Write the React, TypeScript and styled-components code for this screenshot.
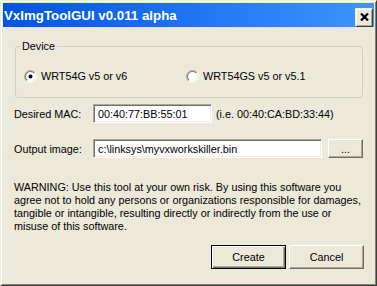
import React from 'react';
import styled, { createGlobalStyle } from 'styled-components';

const GlobalStyle = createGlobalStyle`
  html, body {
    margin: 0;
    padding: 0;
    background: #ece9d8;
  }
  body {
    font-family: 'Liberation Sans', Arial, sans-serif;
    font-size: 10.8px;
    color: #000;
  }
`;

export default function App() {
  return (
    <>
      <GlobalStyle />
      <Window>
        <TitleBar>
          <Title>VxImgToolGUI v0.011 alpha</Title>
          <CloseButton aria-label='Close'>
            <svg width='9' height='8' viewBox='0 0 9 8'>
              <path
                d='M1 0.5 L8 7.5 M8 0.5 L1 7.5'
                stroke='#000'
                strokeWidth='2.2'
                fill='none'
              />
            </svg>
          </CloseButton>
        </TitleBar>
        <Body>
          <GroupBox>
            <Legend>Device</Legend>
            <RadioRow>
              <RadioOption>
                <Radio checked />
                WRT54G v5 or v6
              </RadioOption>
              <RadioOption>
                <Radio />
                WRT54GS v5 or v5.1
              </RadioOption>
            </RadioRow>
          </GroupBox>
          <FieldRow $top={6}>
            <Label>Desired MAC:</Label>
            <TextBox $width={119}>00:40:77:BB:55:01</TextBox>
            <Hint>(i.e. 00:40:CA:BD:33:44)</Hint>
          </FieldRow>
          <FieldRow $top={16}>
            <Label>Output image:</Label>
            <TextBox $width={229}>c:\linksys\myvxworkskiller.bin</TextBox>
            <Button $width={35} $small>...</Button>
          </FieldRow>
          <Warning>
            WARNING: Use this tool at your own risk. By using this software you
            <br />
            agree not to hold any persons or organizations responsible for damages,
            <br />
            tangible or intangible, resulting directly or indirectly from the use or
            <br />
            misuse of this software.
          </Warning>
          <ButtonRow>
            <Button $width={75} $default>
              Create
            </Button>
            <Button $width={75}>Cancel</Button>
          </ButtonRow>
        </Body>
      </Window>
    </>
  );
}

function Radio({ checked }: { checked?: boolean }) {
  return (
    <RadioIcon width='13' height='13' viewBox='0 0 13 13'>
      <defs>
        <linearGradient id='rimDark' x1='0' y1='0' x2='1' y2='1'>
          <stop offset='0.5' stopColor='#aca899' />
          <stop offset='0.5' stopColor='#ffffff' />
        </linearGradient>
        <linearGradient id='rimInner' x1='0' y1='0' x2='1' y2='1'>
          <stop offset='0.5' stopColor='#716f64' />
          <stop offset='0.5' stopColor='#f1efe2' />
        </linearGradient>
      </defs>
      <circle cx='6.5' cy='6.5' r='6' fill='none' stroke='url(#rimDark)' />
      <circle cx='6.5' cy='6.5' r='5' fill='#fff' stroke='url(#rimInner)' />
      {checked && <circle cx='6.5' cy='6.5' r='2' fill='#000' />}
    </RadioIcon>
  );
}

const Window = styled.div`
  box-sizing: border-box;
  width: 377px;
  height: 286px;
  background: #ece9d8;
  border: 1px solid;
  border-color: #f1efe2 #404040 #404040 #f1efe2;
  box-shadow: inset 1px 1px #fff, inset -1px -1px #808080;
  padding: 2px;
  display: flex;
  flex-direction: column;
`;

const TitleBar = styled.div`
  height: 24px;
  display: flex;
  align-items: center;
  justify-content: space-between;
  padding: 0 1px 0 1px;
  background: linear-gradient(to right, #0054e3, #3d95ff);
`;

const Title = styled.div`
  color: #fff;
  font-family: 'Liberation Sans', Arial, sans-serif;
  font-weight: bold;
  font-size: 13.3px;
  padding-top: 1px;
`;

const CloseButton = styled.div`
  box-sizing: border-box;
  width: 18px;
  height: 19px;
  margin-top: 4px;
  display: flex;
  align-items: center;
  justify-content: center;
  background: #ece9d8;
  border: 1px solid;
  border-color: #f1efe2 #404040 #404040 #f1efe2;
  box-shadow: inset 1px 1px #fff, inset -1px -1px #aca899;
`;

const Body = styled.div`
  display: flex;
  flex-direction: column;
  padding: 13px 11px 0 11px;
`;

const GroupBox = styled.fieldset`
  margin: 0 0 0 1px;
  padding: 0 8px 14px 8px;
  border: 1px solid #d0d0bf;
  border-radius: 3px;
`;

const Legend = styled.legend`
  padding: 0 2px;
  margin-left: -4px;
  line-height: 13px;
`;

const RadioRow = styled.div`
  display: flex;
  margin-top: 17px;
`;

const RadioOption = styled.label`
  width: 162px;
  display: flex;
  align-items: center;
  gap: 4px;
  line-height: 13px;
`;

const RadioIcon = styled.svg`
  flex: none;
`;

const FieldRow = styled.div<{ $top: number }>`
  display: flex;
  align-items: center;
  margin-top: ${(p) => p.$top}px;
`;

const Label = styled.div`
  width: 79px;
`;

const TextBox = styled.div<{ $width: number }>`
  box-sizing: border-box;
  width: ${(p) => p.$width}px;
  height: 19px;
  padding: 0 4px;
  display: flex;
  align-items: center;
  background: #fff;
  border: 1px solid;
  border-color: #aca899 #fff #fff #aca899;
  box-shadow: inset 1px 1px #716f64, inset -1px -1px #f1efe2;
  white-space: nowrap;
`;

const Hint = styled.div`
  margin-left: 4px;
`;

const Button = styled.div<{ $width: number; $default?: boolean; $small?: boolean }>`
  box-sizing: border-box;
  width: ${(p) => p.$width}px;
  height: ${(p) => (p.$small ? 19 : 24)}px;
  margin-left: ${(p) => (p.$small ? 6 : 3)}px;
  display: flex;
  align-items: center;
  justify-content: center;
  background: #ece9d8;
  border: 1px solid;
  border-color: ${(p) =>
    p.$default ? '#000' : '#fff #716f64 #716f64 #fff'};
  box-shadow: ${(p) =>
    p.$default
      ? 'inset 1px 1px #fff, inset -1px -1px #716f64, inset -2px -2px #aca899'
      : 'inset -1px -1px #aca899'};
`;

const Warning = styled.div`
  margin-top: 23px;
  line-height: 13px;
  white-space: nowrap;
`;

const ButtonRow = styled.div`
  display: flex;
  justify-content: flex-end;
  margin-top: 12px;
  margin-right: -1px;
`;
